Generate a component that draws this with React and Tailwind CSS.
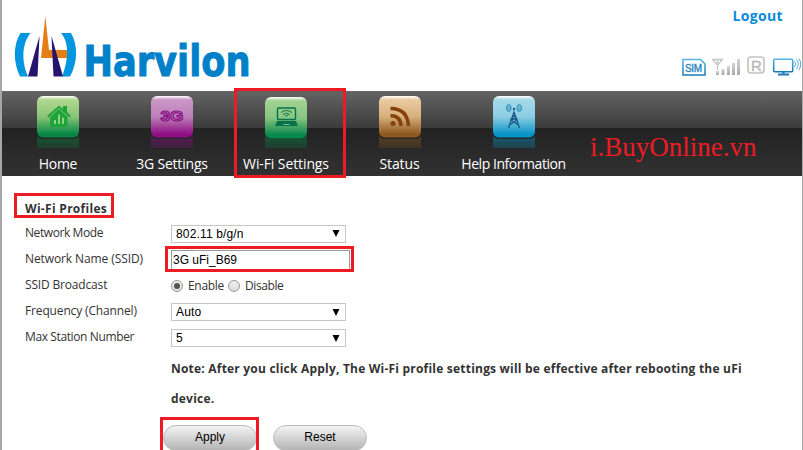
import React from "react";

const SANS = "font-['Open_Sans','Noto_Sans',sans-serif]";
const ARIAL = "font-['Liberation_Sans',sans-serif]";

function Logo() {
  return (
    <svg width="266" height="76" viewBox="14 14 266 76" className="block">
      <path d="M20.500 33H30.500C22 43 21 62 28 76.500H20C13 62 13 45 20.500 33Z" fill="#0096e0" />
      <path d="M61 33H71C78 45 78 62 70 76.500H62C68 62 70 43 61 33Z" fill="#0096e0" />
      <path d="M45.300 16L49 50H67V58H41Z" fill="#e67e17" />
      <path d="M39.500 36L37.500 76.500H28Z" fill="#27146f" />
      <path d="M51.500 36L63 76.500H53.500Z" fill="#27146f" />
      <text x="83.500" y="76" fontSize="42" fontWeight="700" textLength="167" lengthAdjust="spacingAndGlyphs" fill="#0080c8" stroke="#0080c8" strokeWidth="1" strokeLinejoin="round" className="font-['DejaVu_Sans',sans-serif]">Harvilon</text>
    </svg>
  );
}

function StatusIcons() {
  return (
    <svg width="121" height="24" viewBox="681 54 121 24" className="block">
      <defs>
        <linearGradient id="blue" x1="0" y1="0" x2="0" y2="1">
          <stop stopColor="#55b4e8" />
          <stop offset="1" stopColor="#1679b8" />
        </linearGradient>
        <linearGradient id="gray" x1="0" y1="0" x2="0" y2="1">
          <stop stopColor="#d5d5d5" />
          <stop offset="1" stopColor="#a8a8a8" />
        </linearGradient>
      </defs>
      <path d="M683 59.500H700.500L705 64V75H683Z" fill="white" stroke="url(#blue)" strokeWidth="1.500" />
      <text x="685" y="71.500" fontSize="10" textLength="17" fill="#1e7fba" stroke="#1e7fba" strokeWidth=".3" className="font-['Liberation_Sans',sans-serif]">SIM</text>
      <path d="M712 59.500H723M717.500 59V70M713 60L717.500 65L722 60" fill="none" stroke="#c4c4c4" strokeWidth="1.300" />
      <g fill="url(#gray)">
        <rect x="716" y="71" width="3" height="4" />
        <rect x="721.500" y="69" width="3" height="6" />
        <rect x="727" y="66" width="3" height="9" />
        <rect x="732" y="63" width="3" height="12" />
        <rect x="737" y="59" width="3" height="16" />
      </g>
      <rect x="748" y="57" width="16" height="16" rx="3" fill="none" stroke="#c4c4c4" strokeWidth="1.700" />
      <text x="751" y="70.500" fontSize="15" fill="#b4b4b4" stroke="#b4b4b4" strokeWidth=".3" className="font-['Liberation_Sans',sans-serif]">R</text>
      <rect x="773.700" y="59.200" width="19" height="12.500" rx="1" fill="white" stroke="url(#blue)" strokeWidth="1.600" />
      <path d="M778 74.500H789M783.500 72V74" stroke="#187cba" strokeWidth="2" />
      <path d="M794.500 61.500Q797 64 794.500 67M796.500 59.500Q800 64 796.500 69M799 58.500Q802.500 64 799 70" fill="none" stroke="#55a9d8" />
    </svg>
  );
}

function Glyph({ kind }) {
  if (kind === "home")
    return (
      <g>
        <path d="M10 21L22 10.500L26 14V11H30V17L34 21L32 22.500L30.500 21.500V32H13V21.500L11.500 22.500Z" fill="#1fa43a" />
        <path d="M12.500 22L22 13.500L31.500 22" fill="none" stroke="#8fce7e" strokeWidth=".8" />
        <path d="M18 29V25M22 29V19.500M26 29V22.500" stroke="#9bd78a" strokeWidth="1.800" />
      </g>
    );
  if (kind === "3g")
    return (
      <text x="9.500" y="26" fontSize="15" fontWeight="700" textLength="23" lengthAdjust="spacingAndGlyphs" fill="#bd6abb" stroke="#8b1686" strokeWidth="1.200" className="font-['Liberation_Sans',sans-serif]">3G</text>
    );
  if (kind === "wifi")
    return (
      <g fill="none" stroke="#08704b">
        <rect x="12.500" y="13" width="18" height="11.500" rx="1" strokeWidth="1.400" />
        <path d="M12 26H31L33 31H10Z" fill="#08704b" stroke="none" />
        <path d="M16 17.500Q21.500 13.500 27 17.500M18 19.500Q21.500 17 25 19.500M20 21Q21.500 20 23 21" />
        <path d="M18.500 29.500H24.500" stroke="#75c890" />
      </g>
    );
  if (kind === "rss")
    return (
      <g fill="none" stroke="#864009" strokeWidth="3.400">
        <circle cx="14" cy="28.500" r="2.500" fill="#864009" stroke="none" />
        <path d="M11.500 20.800Q21.500 20.500 22 31M11.500 13.500Q28.500 13.500 29.500 31" />
      </g>
    );
  return (
    <g fill="none" stroke="#185a8d">
      <path d="M15.500 33L21 17L26.500 33M16.500 30L24 25L18.500 23L22.500 20M25.500 30L18 25L23.500 23L19.500 20" strokeWidth="1.300" />
      <circle cx="21" cy="14" r="1.200" fill="#185a8d" stroke="none" />
      <ellipse cx="15.800" cy="13" rx="2.300" ry="3.500" fill="#62b3d0" stroke="#3c91b8" />
      <ellipse cx="26.200" cy="13" rx="2.300" ry="3.500" fill="#62b3d0" stroke="#3c91b8" />
    </g>
  );
}

function Tile({ kind, top, mid, bottom, y = 1 }) {
  return (
    <svg width="42" height="56" viewBox="0 0 42 56" className="block shrink-0">
      <defs>
        <linearGradient id={"tile-" + kind} x1="0" y1="0" x2="0" y2="1">
          <stop stopColor="#fff" />
          <stop offset=".09" stopColor={top} />
          <stop offset=".5" stopColor={mid} />
          <stop offset=".92" stopColor={bottom} />
        </linearGradient>
        <linearGradient id={"shade-" + kind} x1="0" y1="0" x2="0" y2="1">
          <stop stopColor={bottom} stopOpacity=".5" />
          <stop offset="1" stopColor={bottom} stopOpacity=".22" />
        </linearGradient>
      </defs>
      <path d="M0 41Q2 44 6 44H36Q40 44 42 41V53H0Z" fill={"url(#shade-" + kind + ")"} />
      <rect y={y} width="42" height="41.500" rx="6" fill={"url(#tile-" + kind + ")"} />
      <Glyph kind={kind} />
    </svg>
  );
}

function NavItem({ label, width, tracking, ...tile }) {
  return (
    <div className={"flex shrink-0 flex-col items-center pt-1 " + width}>
      <Tile {...tile} />
      <span className={"mt-[3px] whitespace-nowrap text-[14px] leading-5 text-white " + tracking}>{label}</span>
    </div>
  );
}

function Select({ value }) {
  return (
    <div className={"flex h-[18px] w-[175px] items-center justify-between border border-[#c6c6c6] bg-white pl-1 pr-[5px] text-[12px] leading-none text-black " + ARIAL}>
      <span className="tracking-[0.15px]">{value}</span>
      <svg width="8" height="7" viewBox="0 0 8 7"><path d="M0.500 0H7.500L4 7Z" /></svg>
    </div>
  );
}

function Radio({ checked }) {
  return (
    <span className="flex size-3 items-center justify-center rounded-full border border-[#999] bg-linear-to-b from-[#eee] to-[#ddd]">
      {checked && <span className="size-1.5 rounded-full bg-[#555]" />}
    </span>
  );
}

function Row({ label, height, tracking, children }) {
  return (
    <div className={"flex items-center " + height}>
      <span className={"w-[146px] shrink-0 whitespace-nowrap pb-0.5 " + tracking}>{label}</span>
      {children}
    </div>
  );
}

export default function App() {
  return (
    <div className={"relative h-[450px] w-[803px] overflow-hidden bg-white text-[12px] text-[#333] " + SANS}>
      <div className="flex h-full flex-col border-l-2 border-[#a7a7a7]">
        <header className="flex h-[91px] shrink-0 justify-between">
          <div className="pl-3 pt-3.5"><Logo /></div>
          <div className="flex flex-col items-end">
            <a className="mr-5 mt-1.5 text-[14px] font-bold leading-5 tracking-[0.35px] text-[#0a8bdc]">Logout</a>
            <div className="mr-px mt-7"><StatusIcons /></div>
          </div>
        </header>
        <nav className="flex h-[85px] shrink-0 bg-[linear-gradient(#646464_0%,#3c3c3c_43%,#222_44%,#323232_100%)]">
          <NavItem label="Home" kind="home" width="w-[112px]" tracking="tracking-[-0.3px]" top="#b0d890" mid="#8ac577" bottom="#078644" />
          <NavItem label="3G Settings" kind="3g" width="w-[116px]" tracking="tracking-[-0.2px]" top="#cb98c7" mid="#bd80b9" bottom="#8c0e82" />
          <NavItem label="Wi-Fi Settings" kind="wifi" y={2} width="w-[112px]" tracking="tracking-[-0.1px]" top="#a2d294" mid="#88c681" bottom="#07884d" />
          <NavItem label="Status" kind="rss" width="w-[115px]" tracking="tracking-[-0.1px]" top="#eacba0" mid="#d7af7c" bottom="#8c591f" />
          <NavItem label="Help Information" kind="tower" width="w-[113px]" tracking="tracking-[-0.45px]" top="#a4d9e8" mid="#8ccde2" bottom="#0794c6" />
          <span className="ml-5 mt-[42px] whitespace-nowrap font-['Liberation_Serif',serif] text-[27px] leading-7 text-[#ed1c24]">i.BuyOnline.vn</span>
        </nav>
        <main className="flex flex-col pl-[23px] pt-[21px]">
          <h1 className="h-[23px] text-[12px] font-bold leading-6 tracking-[0.3px]">Wi-Fi Profiles</h1>
          <Row label="Network Mode" height="h-[27px]" tracking="tracking-[-0.42px]"><Select value="802.11 b/g/n" /></Row>
          <Row label="Network Name (SSID)" height="h-[26px]" tracking="tracking-[-0.1px]">
            <div className={"flex h-5 w-[179px] items-center border border-[#999] pl-px text-[12px] text-black " + ARIAL}>3G uFi_B69</div>
          </Row>
          <Row label="SSID Broadcast" height="h-[26px]" tracking="tracking-[-0.17px]">
            <Radio checked /><span className="ml-[5px] mr-1 tracking-[-0.3px]">Enable</span>
            <Radio /><span className="ml-[5px] tracking-[-0.4px]">Disable</span>
          </Row>
          <Row label="Frequency (Channel)" height="h-[26px]" tracking="tracking-[-0.15px]"><Select value="Auto" /></Row>
          <Row label="Max Station Number" height="h-[26px]" tracking="tracking-[-0.38px]"><Select value="5" /></Row>
          <p className="ml-[146px] mt-[3px] w-[610px] whitespace-nowrap font-bold leading-[30px] tracking-[0.21px]">
            Note: After you click Apply, The Wi-Fi profile settings will be effective after rebooting the uFi<br />device.
          </p>
          <div className={"ml-[138px] mt-[11px] flex gap-4 text-black " + ARIAL}>
            <button className="h-[26px] w-[94px] rounded-full border border-[#bbb] bg-linear-to-b from-[#f4f4f4] to-[#b4b4b4] pb-0.5">Apply</button>
            <button className="h-[26px] w-[94px] rounded-full border border-[#bbb] bg-linear-to-b from-[#f4f4f4] to-[#b4b4b4] pb-0.5">Reset</button>
          </div>
        </main>
      </div>
      <div className="absolute right-0 top-0 h-full w-px bg-[#a7a7a7]" />
      <div className="absolute left-[234px] top-[88px] h-[90px] w-[112px] border-3 border-[#ed1c24]" />
      <div className="absolute left-[14px] top-[193px] h-[25px] w-[100px] border-3 border-[#ed1c24]" />
      <div className="absolute left-[165px] top-[246px] h-[26px] w-[189px] border-3 border-[#ed1c24]" />
      <div className="absolute left-[160px] top-[417px] h-[40px] w-[99px] border-3 border-[#ed1c24]" />
    </div>
  );
}
